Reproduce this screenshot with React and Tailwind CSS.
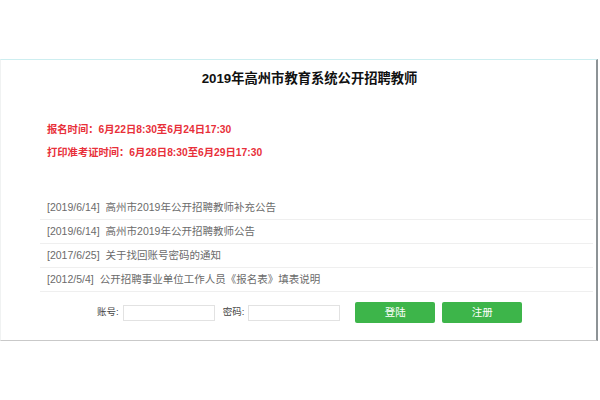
import React from "react";

const NOTICES = [
  { date: "[2019/6/14]", title: "高州市2019年公开招聘教师补充公告" },
  { date: "[2019/6/14]", title: "高州市2019年公开招聘教师公告" },
  { date: "[2017/6/25]", title: "关于找回账号密码的通知" },
  { date: "[2012/5/4]", title: "公开招聘事业单位工作人员《报名表》填表说明" },
];

const font = { fontFamily: '"Liberation Sans", Arial, "Noto Sans CJK SC", sans-serif' };

export default function App() {
  return (
    <div className="w-[600px] h-[400px] bg-white overflow-hidden" style={font}>
      <div className="h-[59px]" />
      <div className="w-[598px] h-[282px] border-t border-t-[#cdeef0] border-r-2 border-r-[#8d9396] border-b border-b-[#c9c9c9] border-l border-l-[#f0f2f2] flex flex-col">
        <h1 className="mt-[10px] pl-[22px] text-center text-[13.3px] leading-[18px] font-bold text-[#111]">
          2019年高州市教育系统公开招聘教师
        </h1>
        <div className="mt-[30px] pl-[46px] text-[10.3px] leading-[23px] font-bold text-[#e8303a]">
          <p>报名时间：6月22日8:30至6月24日17:30</p>
          <p>打印准考证时间：6月28日8:30至6月29日17:30</p>
        </div>
        <ul className="mt-[32px] ml-[39px] w-[553px]">
          {NOTICES.map((n) => (
            <li key={n.date + n.title} className="h-[24px] flex items-center px-[7px] border-b border-[#efefef] text-[10.5px] text-[#6b6b6b] whitespace-nowrap">
              <span>{n.date}</span>
              <span className="ml-[6px]">{n.title}</span>
            </li>
          ))}
        </ul>
        <div className="mt-[10px] pl-[96px] flex items-center text-[9.5px] text-[#444] whitespace-nowrap">
          <span>账号:</span>
          <input className="ml-[4px] w-[92px] h-[16px] border border-[#e2e2e2] bg-white outline-none" />
          <span className="ml-[8px]">密码:</span>
          <input className="ml-[4px] w-[92px] h-[16px] border border-[#e2e2e2] bg-white outline-none" />
          <button type="button" className="ml-[15px] w-[80px] h-[21px] rounded-[2px] bg-[#3db54a] text-white text-[10.5px]">登陆</button>
          <button type="button" className="ml-[7px] w-[80px] h-[21px] rounded-[2px] bg-[#3db54a] text-white text-[10.5px]">注册</button>
        </div>
      </div>
    </div>
  );
}
